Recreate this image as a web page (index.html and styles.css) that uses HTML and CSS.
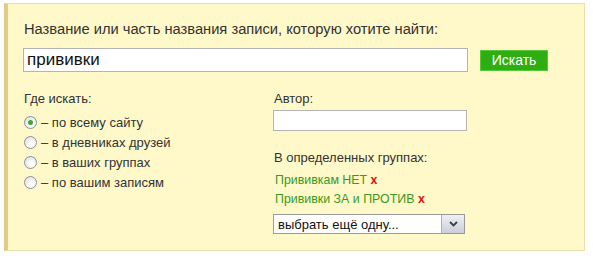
FILE: index.html
```html
<!DOCTYPE html>
<html lang="ru">
<head>
  <meta charset="UTF-8">
  <title>Поиск записей</title>
  <link rel="stylesheet" href="styles.css">
</head>
<body>
  <div class="search-box">
    <div class="title">Название или часть названия записи, которую хотите найти:</div>
    <div class="query-row">
      <div class="text-input query">прививки</div>
      <button class="search-btn">Искать</button>
    </div>

    <div class="columns">
      <div class="col-left">
        <div class="label">Где искать:</div>
        <div class="radio-list">
          <div class="radio-row"><span class="radio checked"></span>– по всему сайту</div>
          <div class="radio-row"><span class="radio"></span>– в дневниках друзей</div>
          <div class="radio-row"><span class="radio"></span>– в ваших группах</div>
          <div class="radio-row"><span class="radio"></span>– по вашим записям</div>
        </div>
      </div>

      <div class="col-right">
        <div class="label">Автор:</div>
        <div class="text-input author"></div>

        <div class="label groups-label">В определенных группах:</div>
        <div class="group-list">
          <div class="group">Прививкам НЕТ <span class="remove">x</span></div>
          <div class="group">Прививки ЗА и ПРОТИВ <span class="remove">x</span></div>
        </div>

        <div class="fake-select">
          <span class="select-text">выбрать ещё одну...</span>
          <span class="select-arrow">
            <svg width="9" height="6" viewBox="0 0 9 6"><path d="M1 1 L4.5 4.5 L8 1" fill="none" stroke="#3a3f4a" stroke-width="1.8"/></svg>
          </span>
        </div>
      </div>
    </div>
  </div>
</body>
</html>
```

FILE: styles.css
```css
* { box-sizing: border-box; }
body {
  margin: 0;
  background: #fff;
  font-family: "Liberation Sans", Arial, sans-serif;
  color: #333;
}
.search-box {
  margin: 3px 0 0 4px;
  width: 581px;
  height: 248px;
  background: #fff8c8;
  border: 1px solid #e8dfae;
  border-left: 4px solid #e3cb86;
  padding: 15px 0 0 15px;
}
.title {
  font-size: 14.7px;
  line-height: 20px;
  padding-left: 1px;
}
.query-row {
  display: flex;
  align-items: center;
  gap: 12px;
  margin-top: 9px;
}
.text-input {
  background: #fff;
  border: 1px solid #b4b4b4;
}
.query {
  width: 445px;
  height: 24px;
  font-size: 17px;
  line-height: 22px;
  padding-left: 3px;
  color: #111;
}
.search-btn {
  width: 68px;
  height: 21px;
  padding: 0;
  background: #2fae12;
  border: 1px solid #58c83a;
  color: #fff;
  font-family: inherit;
  font-size: 14px;
}
.columns {
  display: flex;
  margin-top: 19px;
}
.col-left {
  width: 250px;
}
.label {
  font-size: 13px;
  line-height: 16px;
  padding-left: 1px;
}
.radio-list {
  margin-top: 5px;
}
.radio-row {
  display: flex;
  align-items: center;
  height: 20px;
  font-size: 13px;
}
.radio {
  width: 13px;
  height: 13px;
  margin: 0 4px 0 1px;
  border-radius: 50%;
  border: 1px solid #8a93a0;
  background: radial-gradient(circle at 60% 65%, #fff 20%, #dcdcdc 90%);
  display: flex;
  align-items: center;
  justify-content: center;
}
.radio.checked::after {
  content: "";
  width: 5px;
  height: 5px;
  border-radius: 50%;
  background: #3fa82c;
}
.author {
  width: 194px;
  height: 21px;
  margin-top: 3px;
}
.groups-label {
  margin-top: 19px;
}
.group-list {
  margin-top: 5px;
}
.group {
  font-size: 12.4px;
  line-height: 19px;
  color: #3b9a1d;
  padding-left: 2px;
}
.remove {
  color: #e01010;
  font-weight: bold;
}
.fake-select {
  display: flex;
  align-items: center;
  width: 192px;
  height: 20px;
  margin-top: 5px;
  background: #fff;
  border: 1px solid #9a9a9a;
  font-size: 13px;
  color: #111;
}
.select-text {
  flex: 1;
  padding-left: 4px;
}
.select-arrow {
  width: 23px;
  height: 18px;
  display: flex;
  align-items: center;
  justify-content: center;
  background: linear-gradient(#eef0f4, #c9ced8);
  border-left: 1px solid #a9afbb;
}
```
